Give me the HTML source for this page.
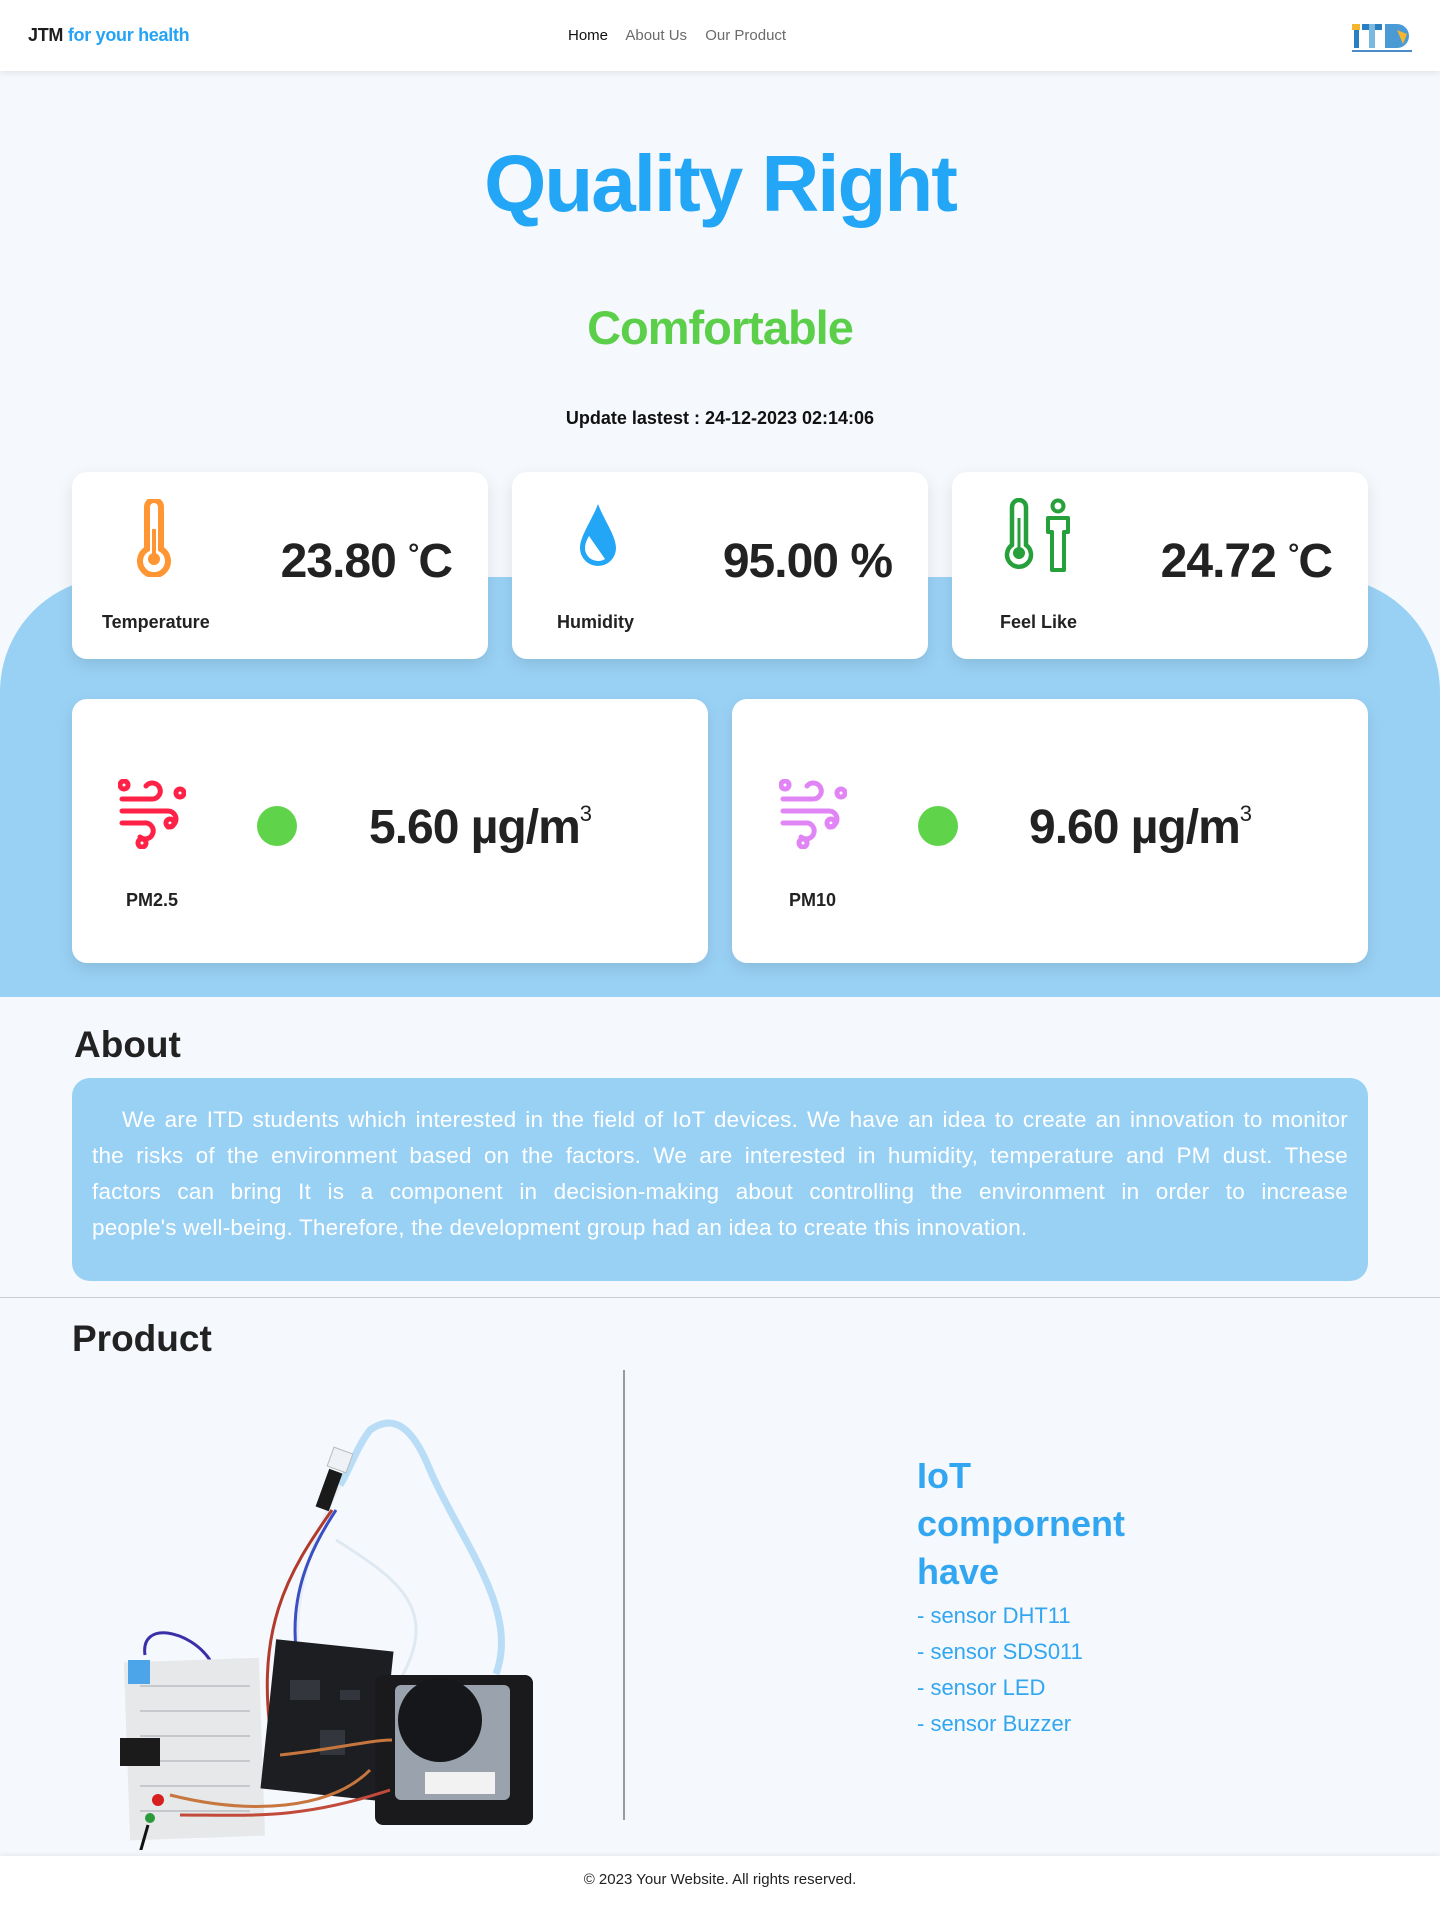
<!DOCTYPE html>
<html><head><meta charset="utf-8">
<style>
*{margin:0;padding:0;box-sizing:border-box}
body{width:1440px;height:1916px;background:#f5f8fc;font-family:"Liberation Sans",sans-serif;color:#1d1d1f;position:relative;overflow:hidden}
.nav{position:absolute;left:0;top:0;width:1440px;height:71px;background:#fff;box-shadow:0 2px 6px rgba(0,0,0,.08);z-index:5}
.brand{position:absolute;left:28px;top:25px;font-size:18px;font-weight:bold;letter-spacing:-.3px}
.brand span{color:#25a3f5}
.links{position:absolute;left:568px;top:27px;font-size:15px;color:#6b6b6b}
.links a{margin-right:14px}
.links a.h{color:#111}
.abs{position:absolute}
.title{position:absolute;left:0;width:1440px;text-align:center}
.blue{position:absolute;left:0;top:577px;width:1440px;height:420px;background:#99d1f5;border-radius:115px 115px 0 0}
.card{position:absolute;background:#fff;border-radius:15px;box-shadow:0 6px 16px rgba(0,0,0,.1)}
.val{position:absolute;font-weight:bold;font-size:48px;letter-spacing:-1px;color:#222}
.lab{position:absolute;font-weight:bold;font-size:18px;color:#222}
.dot{position:absolute;width:40px;height:40px;border-radius:50%;background:#5fd44a}
.ln{display:block;white-space:nowrap;text-align:justify;text-align-last:justify}
</style></head><body>
<div class="nav">
 <div class="brand">JTM <span>for your health</span></div>
 <div class="links"><a class="h">Home</a> <a>About Us</a> <a>Our Product</a></div>
 <svg class="abs" style="left:1352px;top:20px" width="60" height="36" viewBox="0 0 60 36">
  <rect x="2" y="4" width="5" height="24" fill="#2a7fc0"/><rect x="0" y="4" width="8" height="6" fill="#f5b52e"/>
  <rect x="10" y="4" width="20" height="6" fill="#2a7fc0"/><rect x="17" y="4" width="6" height="24" fill="#7bb8e2"/>
  <path d="M33 4h12a12 12 0 0 1 0 24h-12z" fill="#4a9ad6"/><path d="M45 10l10 4-4 10z" fill="#f5b52e"/>
  <rect x="0" y="30" width="60" height="2" fill="#4a8bc8"/>
 </svg>
</div>

<div class="title" style="top:138px;font-size:80px;font-weight:bold;color:#22a6f5;letter-spacing:-2px">Quality Right</div>
<div class="title" style="top:300px;font-size:47px;font-weight:bold;color:#5ccf4a;letter-spacing:-1px">Comfortable</div>
<div class="title" style="top:408px;font-size:18px;font-weight:bold;color:#111">Update lastest : 24-12-2023 02:14:06</div>

<div class="blue"></div>

<div class="card" style="left:72px;top:472px;width:416px;height:187px">
 <svg class="abs" style="left:60px;top:27px" width="44" height="78" viewBox="0 0 44 78"><path d="M15 8a7 7 0 0 1 14 0v42a14 14 0 1 1-14 0z" fill="none" stroke="#ff9533" stroke-width="6"/><path d="M22 30v26" stroke="#ff9533" stroke-width="4"/><circle cx="22" cy="60" r="6" fill="#ff9533"/></svg>
 <div class="val" style="right:36px;top:62px">23.80 <sup style="font-size:28px;vertical-align:14px">°</sup>C</div>
 <div class="lab" style="left:30px;top:140px">Temperature</div>
</div>
<div class="card" style="left:512px;top:472px;width:416px;height:187px">
 <svg class="abs" style="left:63px;top:30px" width="46" height="66" viewBox="0 0 46 66"><path d="M23 2C17 18 5 34 5 46a18 18 0 0 0 36 0C41 34 29 18 23 2z" fill="#22a6f5"/><path d="M14 34c-3 5-4 9-4 12a13 13 0 0 0 20 11z" fill="#fff"/></svg>
 <div class="val" style="right:36px;top:62px">95.00 %</div>
 <div class="lab" style="left:45px;top:140px">Humidity</div>
</div>
<div class="card" style="left:952px;top:472px;width:416px;height:187px">
 <svg class="abs" style="left:50px;top:26px" width="76" height="76" viewBox="0 0 76 76"><path d="M10 9a7 7 0 0 1 14 0v38a12 12 0 1 1-14 0z" fill="none" stroke="#26a03a" stroke-width="4.5"/><path d="M17 20v30" stroke="#26a03a" stroke-width="3"/><circle cx="17" cy="55" r="6" fill="#26a03a"/><circle cx="56" cy="8" r="5.5" fill="none" stroke="#26a03a" stroke-width="4"/><path d="M46 20h20v14h-4v38h-12v-38h-4z" fill="none" stroke="#26a03a" stroke-width="4" stroke-linejoin="round"/></svg>
 <div class="val" style="right:36px;top:62px">24.72 <sup style="font-size:28px;vertical-align:14px">°</sup>C</div>
 <div class="lab" style="left:48px;top:140px">Feel Like</div>
</div>

<div class="card" style="left:72px;top:699px;width:636px;height:264px">
 <svg class="abs" style="left:46px;top:80px" width="68" height="70" viewBox="0 0 68 70" fill="none" stroke="#ff2146" stroke-width="5" stroke-linecap="round"><circle cx="6" cy="6" r="4"/><circle cx="62" cy="14" r="4"/><circle cx="52" cy="44" r="4"/><circle cx="24" cy="64" r="4"/><path d="M4 20h30a8 8 0 1 0-6-13"/><path d="M4 32h46a8 8 0 1 1 0 16"/><path d="M4 44h22a8 8 0 1 1-4 14"/></svg>
 <div class="dot" style="left:185px;top:107px"></div>
 <div class="val" style="left:297px;top:101px">5.60 µg/m<sup style="font-size:22px;vertical-align:22px;font-weight:normal">3</sup></div>
 <div class="lab" style="left:54px;top:191px">PM2.5</div>
</div>
<div class="card" style="left:732px;top:699px;width:636px;height:264px">
 <svg class="abs" style="left:47px;top:80px" width="68" height="70" viewBox="0 0 68 70" fill="none" stroke="#e184f5" stroke-width="5" stroke-linecap="round"><circle cx="6" cy="6" r="4"/><circle cx="62" cy="14" r="4"/><circle cx="52" cy="44" r="4"/><circle cx="24" cy="64" r="4"/><path d="M4 20h30a8 8 0 1 0-6-13"/><path d="M4 32h46a8 8 0 1 1 0 16"/><path d="M4 44h22a8 8 0 1 1-4 14"/></svg>
 <div class="dot" style="left:186px;top:107px"></div>
 <div class="val" style="left:297px;top:101px">9.60 µg/m<sup style="font-size:22px;vertical-align:22px;font-weight:normal">3</sup></div>
 <div class="lab" style="left:57px;top:191px">PM10</div>
</div>

<div class="abs" style="left:74px;top:1024px;font-size:37px;font-weight:bold;color:#222">About</div>
<div class="abs" style="left:72px;top:1078px;width:1296px;height:203px;background:#99d1f5;border-radius:18px;padding:24px 20px 0 20px;color:#fff;font-size:22.5px;letter-spacing:0.2px;line-height:36px">
<span class="ln" style="padding-left:30px">We are ITD students which interested in the field of IoT devices. We have an idea to create an innovation to monitor</span>
<span class="ln">the risks of the environment based on the factors. We are interested in humidity, temperature and PM dust. These</span>
<span class="ln">factors can bring It is a component in decision-making about controlling the environment in order to increase</span>
<span style="display:block">people's well-being. Therefore, the development group had an idea to create this innovation.</span>
</div>
<div class="abs" style="left:0;top:1297px;width:1440px;height:1px;background:#c9ccd1"></div>

<div class="abs" style="left:72px;top:1318px;font-size:37px;font-weight:bold;color:#222">Product</div>
<div class="abs" style="left:623px;top:1370px;width:2px;height:450px;background:#9a9a9a"></div>

<svg class="abs" style="left:100px;top:1410px" width="450" height="440" viewBox="0 0 450 440">
 <path d="M396 264C420 200 360 130 330 60 310 10 290 6 270 20 255 40 250 60 240 75" fill="none" stroke="#b9ddf6" stroke-width="7"/>
 <path d="M240 75C210 130 190 200 200 260" fill="none" stroke="#e8eef4" stroke-width="3"/>
 <path d="M232 100C190 160 150 220 175 350" fill="none" stroke="#b23b2d" stroke-width="3"/>
 <path d="M236 100C190 170 180 230 220 330" fill="none" stroke="#3a4fc2" stroke-width="3"/>
 <path d="M236 130C300 170 340 200 300 270" fill="none" stroke="#dfe9f1" stroke-width="3"/>
 <rect x="222" y="60" width="14" height="40" fill="#1a1a1a" transform="rotate(20 229 80)"/>
 <rect x="230" y="40" width="20" height="20" fill="#eef2f6" stroke="#bbb" transform="rotate(20 240 50)"/>
 <path d="M45 245C40 210 90 220 110 250" fill="none" stroke="#3a2fa8" stroke-width="3"/>
 <rect x="27" y="250" width="135" height="178" fill="#e6e8ea" transform="rotate(-2 95 340)"/>
 <g fill="#c5c8cc"><rect x="40" y="275" width="110" height="2"/><rect x="40" y="300" width="110" height="2"/><rect x="40" y="325" width="110" height="2"/><rect x="40" y="350" width="110" height="2"/><rect x="40" y="375" width="110" height="2"/><rect x="40" y="400" width="110" height="2"/></g>
 <rect x="28" y="250" width="22" height="24" fill="#4ba5e8"/>
 <rect x="20" y="328" width="40" height="28" fill="#1b1b1b"/>
 <circle cx="58" cy="390" r="6" fill="#d62020"/><circle cx="50" cy="408" r="5" fill="#2a9a3a"/>
 <path d="M48 415l-8 28" stroke="#111" stroke-width="3"/>
 <rect x="168" y="235" width="118" height="150" fill="#1c1e22" transform="rotate(6 227 310)"/>
 <g fill="#33363c"><rect x="190" y="270" width="30" height="20"/><rect x="220" y="320" width="25" height="25"/><rect x="240" y="280" width="20" height="10"/></g>
 <rect x="275" y="265" width="158" height="150" rx="8" fill="#1a1a1c"/>
 <rect x="295" y="275" width="115" height="115" rx="6" fill="#9aa3ad"/>
 <circle cx="340" cy="310" r="42" fill="#16171a"/>
 <rect x="325" y="362" width="70" height="22" fill="#f2f2f2"/>
 <path d="M180 345C230 340 270 330 292 330M70 385C150 405 230 400 270 360" fill="none" stroke="#c7763e" stroke-width="3"/>
 <path d="M80 405C150 405 200 410 290 380" fill="none" stroke="#c24a3a" stroke-width="3"/>
</svg>

<div class="abs" style="left:917px;top:1452px;font-size:36px;font-weight:bold;color:#32a6f0;line-height:48px">IoT<br>compornent<br>have</div>
<div class="abs" style="left:917px;top:1598px;font-size:22px;color:#32a6f0;line-height:36px">- sensor DHT11<br>- sensor SDS011<br>- sensor LED<br>- sensor Buzzer</div>

<div class="abs" style="left:0;top:1856px;width:1440px;height:60px;background:#fff;box-shadow:0 -2px 4px rgba(0,0,0,.05)"></div>
<div class="title" style="top:1871px;font-size:15px;color:#222">© 2023 Your Website. All rights reserved.</div>
</body></html>
